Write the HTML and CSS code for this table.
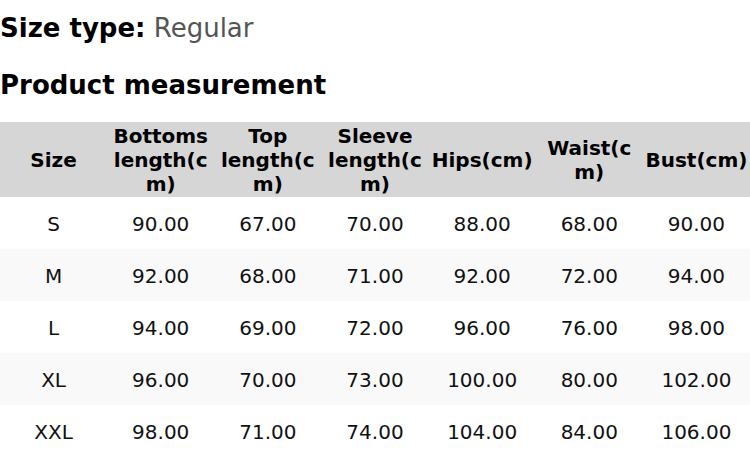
FILE: index.html
```html
<!DOCTYPE html>
<html>
<head>
<meta charset="utf-8">
<link rel="stylesheet" href="styles.css">
</head>
<body>
<div class="page">
  <div class="size-type"><span class="label">Size type:</span> <span class="value">Regular</span></div>
  <h2 class="title">Product measurement</h2>
  <table class="sizes">
    <thead>
      <tr>
        <th>Size</th>
        <th>Bottoms length(cm)</th>
        <th>Top length(cm)</th>
        <th>Sleeve length(cm)</th>
        <th>Hips(cm)</th>
        <th>Waist(cm)</th>
        <th>Bust(cm)</th>
      </tr>
    </thead>
    <tbody>
      <tr><td>S</td><td>90.00</td><td>67.00</td><td>70.00</td><td>88.00</td><td>68.00</td><td>90.00</td></tr>
      <tr><td>M</td><td>92.00</td><td>68.00</td><td>71.00</td><td>92.00</td><td>72.00</td><td>94.00</td></tr>
      <tr><td>L</td><td>94.00</td><td>69.00</td><td>72.00</td><td>96.00</td><td>76.00</td><td>98.00</td></tr>
      <tr><td>XL</td><td>96.00</td><td>70.00</td><td>73.00</td><td>100.00</td><td>80.00</td><td>102.00</td></tr>
      <tr><td>XXL</td><td>98.00</td><td>71.00</td><td>74.00</td><td>104.00</td><td>84.00</td><td>106.00</td></tr>
    </tbody>
  </table>
</div>
</body>
</html>
```
FILE: styles.css
```css
html, body {
  margin: 0;
  padding: 0;
  background: #fff;
}
body {
  font-family: "DejaVu Sans", sans-serif;
  color: #000;
}
.page {
  display: flex;
  flex-direction: column;
  padding-top: 13px;
}
.size-type {
  font-size: 26px;
  line-height: 30px;
}
.size-type .label {
  font-weight: bold;
}
.size-type .value {
  color: #555;
}
.title {
  font-size: 26px;
  line-height: 30px;
  font-weight: bold;
  margin: 27px 0 22px;
}
.sizes {
  width: 750px;
  border-collapse: collapse;
  table-layout: fixed;
}
.sizes th {
  background: #d6d6d6;
  font-size: 20px;
  line-height: 24px;
  font-weight: bold;
  padding: 1.5px 2px;
  height: 72px;
  text-align: center;
  vertical-align: middle;
  overflow-wrap: anywhere;
}
.sizes td {
  font-size: 20px;
  line-height: 24px;
  padding: 15px 2px 13px;
  text-align: center;
  color: #111;
}
.sizes tbody tr:nth-child(even) td {
  background: #f9f9f9;
}
```
